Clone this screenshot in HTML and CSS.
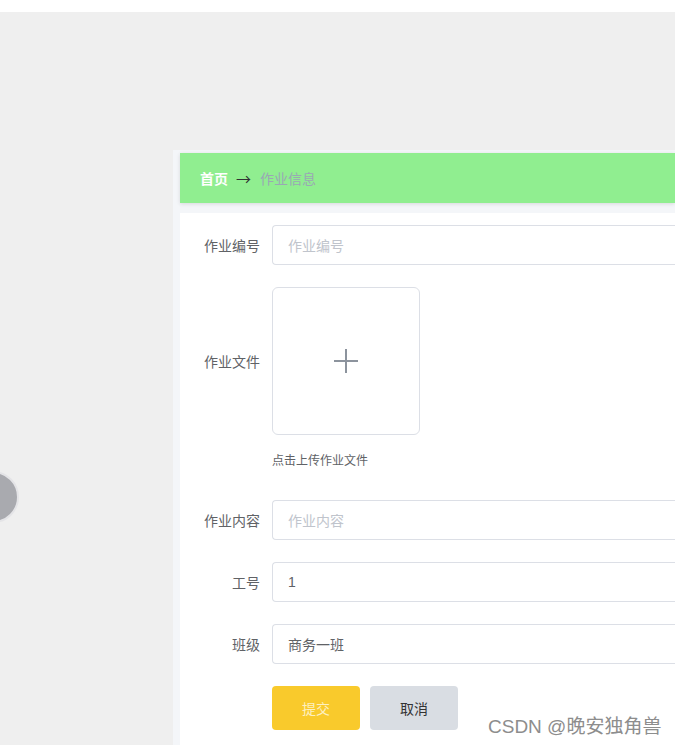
FILE: index.html
```html
<!DOCTYPE html>
<html lang="zh-CN">
<head>
<meta charset="utf-8">
<title>作业信息</title>
<link rel="stylesheet" href="styles.css">
</head>
<body>
<div class="topbar"></div>
<div class="stage">
  <div class="side-dot"></div>
  <div class="panel">
    <div class="crumbs">
      <span class="crumb-home">首页</span>
      <span class="crumb-sep">→</span>
      <span class="crumb-current">作业信息</span>
    </div>
    <div class="card">
      <div class="row">
        <label class="label">作业编号</label>
        <div class="input"><span class="placeholder">作业编号</span></div>
      </div>
      <div class="row">
        <label class="label">作业文件</label>
        <div class="uploader">
          <svg class="plus" width="24" height="24" viewBox="0 0 24 24"><path d="M12 0V24M0 12H24" stroke="#8c939d" stroke-width="2" fill="none"/></svg>
        </div>
      </div>
      <div class="tip-row">
        <span class="tip">点击上传作业文件</span>
      </div>
      <div class="row">
        <label class="label">作业内容</label>
        <div class="input"><span class="placeholder">作业内容</span></div>
      </div>
      <div class="row">
        <label class="label">工号</label>
        <div class="input"><span class="value">1</span></div>
      </div>
      <div class="row">
        <label class="label">班级</label>
        <div class="input"><span class="value">商务一班</span></div>
      </div>
      <div class="actions">
        <button class="btn btn-submit">提交</button>
        <button class="btn btn-cancel">取消</button>
      </div>
    </div>
  </div>
  <div class="watermark">CSDN @晚安独角兽</div>
</div>
</body>
</html>
```

FILE: styles.css
```css
html, body {
  margin: 0;
  padding: 0;
}
body {
  width: 675px;
  height: 745px;
  overflow: hidden;
  background: #efefef;
  font-family: "Liberation Sans", "Noto Sans CJK SC", sans-serif;
  font-size: 14px;
  color: #606266;
}
.topbar {
  height: 12px;
  background: #ffffff;
}
.stage {
  position: relative;
  height: 733px;
  padding: 138px 0 0 173px;
  box-sizing: border-box;
  overflow: hidden;
}
.side-dot {
  position: absolute;
  left: -33px;
  top: 459px;
  width: 48px;
  height: 48px;
  border-radius: 50%;
  background: #a9aaaf;
  border: 2px solid #e4e4e7;
}
.panel {
  background: #f4f6f9;
  padding: 3px 0 0 7px;
  height: 100%;
  box-sizing: border-box;
  display: flex;
  flex-direction: column;
}
.crumbs {
  height: 50px;
  flex: none;
  background: #90ee90;
  box-shadow: 0 1px 4px rgba(0, 0, 0, 0.12);
  display: flex;
  align-items: center;
  padding-left: 20px;
  font-size: 14px;
}
.crumb-home {
  color: #ffffff;
  font-weight: bold;
}
.crumb-sep {
  color: #303133;
  margin: 0 9px 0 8px;
  font-family: "Noto Sans CJK SC", sans-serif;
  font-size: 15px;
}
.crumb-current {
  color: #9aa8b4;
}
.card {
  margin-top: 10px;
  background: #ffffff;
  padding-top: 12px;
  flex: 1;
}
.row {
  display: flex;
  align-items: center;
  margin-bottom: 22px;
}
.label {
  width: 92px;
  padding-right: 12px;
  box-sizing: border-box;
  text-align: right;
  color: #606266;
  font-size: 14px;
  flex: none;
}
.input {
  flex: 1;
  height: 40px;
  border: 1px solid #dcdfe6;
  border-right: none;
  border-radius: 4px 0 0 4px;
  box-sizing: border-box;
  display: flex;
  align-items: center;
  padding-left: 15px;
}
.placeholder {
  color: #c0c4cc;
}
.value {
  color: #606266;
}
.uploader {
  width: 148px;
  height: 148px;
  border: 1px solid #dcdfe6;
  border-radius: 6px;
  box-sizing: border-box;
  display: flex;
  align-items: center;
  justify-content: center;
}
.tip-row {
  padding: 17px 0 0 92px;
  height: 43px;
  box-sizing: border-box;
  margin-top: -22px;
  margin-bottom: 22px;
}
.tip {
  font-size: 12px;
  line-height: 18px;
  color: #606266;
}
.actions {
  display: flex;
  gap: 10px;
  padding-left: 92px;
}
.btn {
  width: 88px;
  height: 44px;
  border: none;
  border-radius: 4px;
  font-family: "Liberation Sans", "Noto Sans CJK SC", sans-serif;
  font-size: 14px;
  padding: 0;
}
.btn-submit {
  background: #f9ca2c;
  color: #fdf0c0;
}
.btn-cancel {
  background: #d9dde3;
  color: #333333;
}
.watermark {
  position: absolute;
  left: 488px;
  top: 699px;
  font-size: 19px;
  color: #8d8d8d;
  text-shadow: 0 0 2px #ffffff, 1px 1px 0 #ffffff;
  white-space: nowrap;
}
```
